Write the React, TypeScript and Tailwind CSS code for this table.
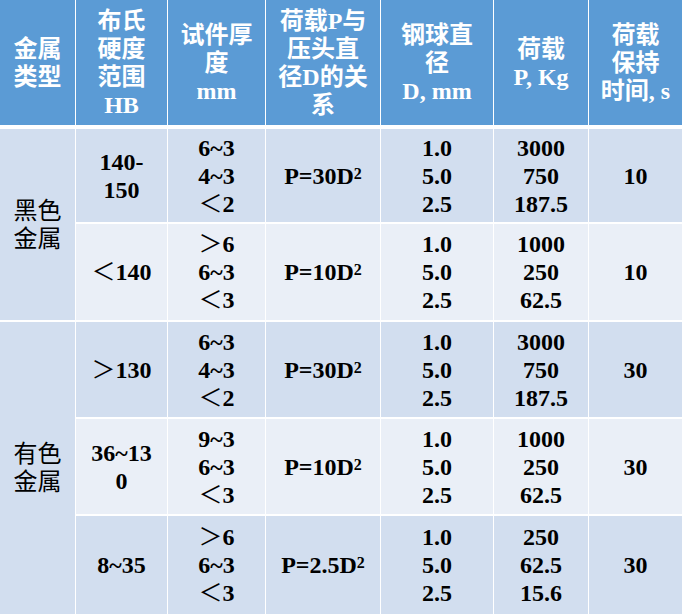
import React from "react";

const HEAD = "bg-[#5B9BD5] text-white font-bold self-start h-[125px]";
const DARK = "bg-[#D2DEEF] text-black font-bold";
const LIGHT = "bg-[#EAEFF7] text-black font-bold";

function renderLine(l: string) {
  if (l.startsWith("＜") || l.startsWith("＞")) {
    return (
      <>
        <span className="font-normal">{l[0]}</span>
        {l.slice(1)}
      </>
    );
  }
  if (l.endsWith("D²")) {
    return (
      <>
        {l.slice(0, -1)}
        <span className="relative -top-[5px] text-[16px] font-bold leading-none">2</span>
      </>
    );
  }
  return l;
}

function Cell({ lines, cls }: { lines: string[]; cls: string }) {
  return (
    <div className={`flex flex-col items-center justify-center text-center ${cls}`}>
      {lines.map((l, i) => (
        <div key={i} className="whitespace-nowrap">
          {renderLine(l)}
        </div>
      ))}
    </div>
  );
}

type Row = {
  hb: string[];
  thick: string[];
  rel: string;
  d: string[];
  p: string[];
  t: string;
};

const rows: Row[] = [
  { hb: ["140-", "150"], thick: ["6~3", "4~3", "＜2"], rel: "P=30D²", d: ["1.0", "5.0", "2.5"], p: ["3000", "750", "187.5"], t: "10" },
  { hb: ["＜140"], thick: ["＞6", "6~3", "＜3"], rel: "P=10D²", d: ["1.0", "5.0", "2.5"], p: ["1000", "250", "62.5"], t: "10" },
  { hb: ["＞130"], thick: ["6~3", "4~3", "＜2"], rel: "P=30D²", d: ["1.0", "5.0", "2.5"], p: ["3000", "750", "187.5"], t: "30" },
  { hb: ["36~13", "0"], thick: ["9~3", "6~3", "＜3"], rel: "P=10D²", d: ["1.0", "5.0", "2.5"], p: ["1000", "250", "62.5"], t: "30" },
  { hb: ["8~35"], thick: ["＞6", "6~3", "＜3"], rel: "P=2.5D²", d: ["1.0", "5.0", "2.5"], p: ["250", "62.5", "15.6"], t: "30" },
];

export default function App() {
  return (
    <div
      className="w-[682px] h-[614px] bg-white grid grid-cols-[75px_91px_97px_114px_112px_94px_93px] grid-rows-[127px_93px_96px_95px_95px_98px] gap-x-px gap-y-[2px] text-[24px] leading-[28px]"
      style={{ fontFamily: '"Liberation Serif", "Noto Sans CJK SC", serif' }}
    >
      <Cell cls={HEAD} lines={["金属", "类型"]} />
      <Cell cls={HEAD} lines={["布氏", "硬度", "范围", "HB"]} />
      <Cell cls={HEAD} lines={["试件厚", "度", "mm"]} />
      <Cell cls={HEAD} lines={["荷载P与", "压头直", "径D的关", "系"]} />
      <Cell cls={HEAD} lines={["钢球直", "径", "D, mm"]} />
      <Cell cls={HEAD} lines={["荷载", "P, Kg"]} />
      <Cell cls={HEAD} lines={["荷载", "保持", "时间, s"]} />

      {rows.map((r, i) => {
        const band = i % 2 === 0 ? DARK : LIGHT;
        return (
          <React.Fragment key={i}>
            {i === 0 && (
              <Cell cls="bg-[#D2DEEF] text-black font-normal row-span-2" lines={["黑色", "金属"]} />
            )}
            {i === 2 && (
              <Cell cls="bg-[#D2DEEF] text-black font-normal row-span-3" lines={["有色", "金属"]} />
            )}
            <Cell cls={band} lines={r.hb} />
            <Cell cls={band} lines={r.thick} />
            <Cell cls={band} lines={[r.rel]} />
            <Cell cls={band} lines={r.d} />
            <Cell cls={band} lines={r.p} />
            <Cell cls={band} lines={[r.t]} />
          </React.Fragment>
        );
      })}
    </div>
  );
}
